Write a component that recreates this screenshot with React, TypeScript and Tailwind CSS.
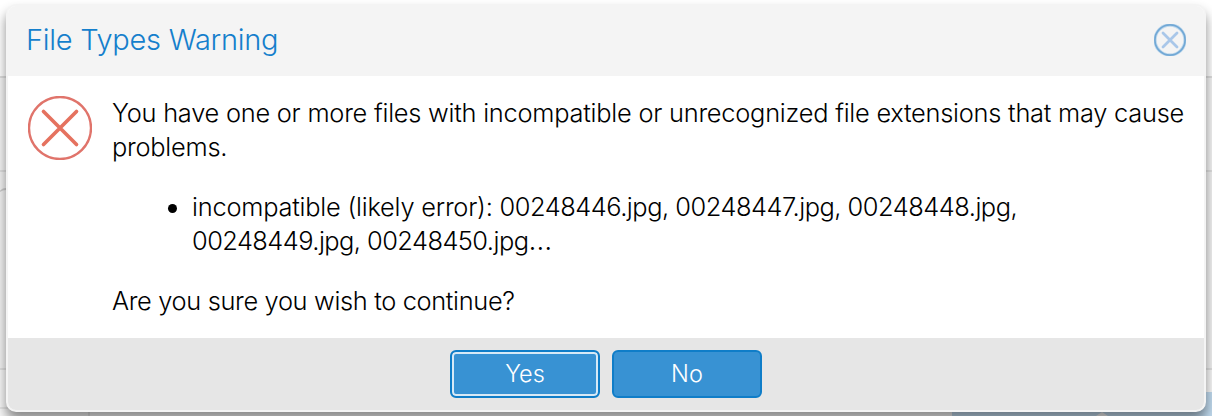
import type { ReactNode } from "react";

function PageBehind() {
  return (
    <div className="absolute inset-0 flex flex-col bg-white">
      <div className="box-content h-[76px] border-b-2 border-[#dedede]" />
      <div className="h-[92px] bg-[#f5f5f5]" />
      <div className="h-[200px] border-y-2 border-[#e0e0e0] bg-[#f3f3f3] pt-4">
        <div className="-ml-0.5 h-full w-40 rounded-lg border-t-2 border-[#cccccc]" />
      </div>
      <div className="flex flex-1 items-end bg-[#f8f8f8]">
        <div className="h-[9px] w-[90px] border-t-2 border-r-2 border-[#e6e6e6]" />
        <div className="flex-1" />
        <div className="flex h-6 w-[260px] items-end justify-center bg-[#c0daee]">
          <svg className="mr-[-40px] h-1 w-3" viewBox="0 0 12 4">
            <path d="M0 4 6 0l6 4z" fill="#f3f3f3" />
          </svg>
        </div>
      </div>
    </div>
  );
}

function CloseIcon() {
  return (
    <svg className="size-8" viewBox="0 0 32 32" fill="none" strokeLinecap="round">
      <circle cx="16" cy="16" r="15" stroke="#c0d9ed" strokeWidth="3.4" />
      <circle cx="16" cy="16" r="15.1" stroke="#71a8d5" strokeWidth="1.7" />
      <path d="M9 9l14 14M23 9 9 23" stroke="#a9c7e9" strokeWidth="2.8" />
    </svg>
  );
}

function ErrorIcon() {
  return (
    <svg className="size-16 shrink-0" viewBox="0 0 64 64" fill="none" strokeLinecap="round">
      <circle cx="32" cy="32" r="31" stroke="#e0746b" strokeWidth="2.4" />
      <path d="M15.5 15.5l33 33M48.5 15.5l-33 33" stroke="#e5725f" strokeWidth="3.7" />
    </svg>
  );
}

function DialogButton({ focused, children }: { focused?: boolean; children: ReactNode }) {
  return (
    <button
      className={
        "h-12 w-[150px] rounded-md border-2 border-[#0f7dc8] bg-[#3892d3] text-[23.5px] leading-[42px] text-white " +
        (focused ? "shadow-[inset_0_0_0_2px_#d7e9f6]" : "")
      }
    >
      {children}
    </button>
  );
}

export default function App() {
  return (
    <div className="relative h-[416px] w-[1212px] overflow-hidden font-['Inter','Liberation_Sans',sans-serif] font-light">
      <PageBehind />
      <div className="relative mx-[6px] mt-1 flex h-[408px] flex-col overflow-hidden rounded-[10px] border-2 border-[#f4f4f4] bg-white shadow-[0_8px_12px_rgba(0,0,0,0.45)]">
        <header className="flex h-[70px] shrink-0 items-center justify-between bg-[#f4f4f4] pr-[18px] pb-0.5 pl-[18px]">
          <h1 className="text-[29px] leading-8 tracking-[-0.28px] text-[#157fcc]">File Types Warning</h1>
          <CloseIcon />
        </header>
        <main className="flex flex-1 gap-5 pt-5 pl-5 text-[25.4px] leading-[34px] whitespace-nowrap text-black">
          <ErrorIcon />
          <div>
            <p className="tracking-[-0.24px]">
              You have one or more files with incompatible or unrecognized file extensions that may cause
              <br />
              problems.
            </p>
            <ul className="my-[26px] pl-20">
              <li className="relative tracking-[-0.5px] before:absolute before:top-[14px] before:-left-6 before:size-[9px] before:rounded-full before:bg-black">
                <span className="tracking-[-0.22px]">incompatible (likely error): </span>
                <span className="tracking-[-0.48px]">00248446.jpg, 00248447.jpg, 00248448.jpg,</span>
                <br />
                <span className="tracking-[-0.54px]">00248449.jpg, 00248450.jpg</span>
                <span className="text-[28px] leading-none">…</span>
              </li>
            </ul>
            <p className="tracking-[-0.34px]">Are you sure you wish to continue?</p>
          </div>
        </main>
        <footer className="flex h-[72px] shrink-0 items-start justify-center gap-3 bg-[#e6e6e6] pt-3">
          <DialogButton focused>Yes</DialogButton>
          <DialogButton>No</DialogButton>
        </footer>
      </div>
    </div>
  );
}
